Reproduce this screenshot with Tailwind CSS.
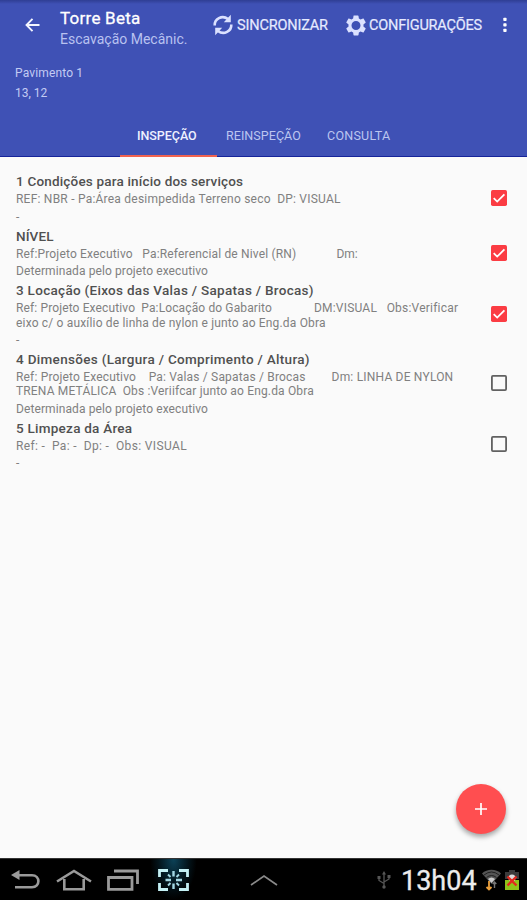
<!DOCTYPE html>
<html lang="pt-BR">
<head>
<meta charset="utf-8">
<title>Torre Beta</title>
<script src="https://cdn.jsdelivr.net/npm/@tailwindcss/browser@4"></script>
</head>
<body class="w-[527px] h-[900px] overflow-hidden bg-[#fafafa] font-[Roboto,sans-serif] flex flex-col [&_p]:whitespace-pre">
<header class="h-[157px] shrink-0 bg-[#3f51b5] border-b border-[#16249a] flex flex-col text-white">
  <div class="h-1 shrink-0 bg-linear-to-b from-[#2f3e94] to-[#3f51b5]"></div>
  <div class="h-[46px] shrink-0 flex items-center">
    <svg class="ml-[25px] w-[15px] h-[14px] -mt-1" viewBox="0 0 15 14" fill="none" stroke="#f4f6ff" stroke-width="1.9"><path d="M7.5 .8L1.5 7l6 6.200M1.500 7H14.500"/></svg>
    <div class="ml-5 mt-[3px] w-[153px] flex flex-col">
      <h1 class="text-[17px] leading-[21px] tracking-[0.25px] [-webkit-text-stroke:0.3px_white]">Torre Beta</h1>
      <p class="text-[14px] leading-[21px] text-[#b9c2f0]">Escavação Mecânic.</p>
    </div>
    <svg class="w-5 h-[22px] -mt-1" viewBox="0 0 20 22" fill="none" stroke="#dbe1ff" stroke-width="2.600"><path d="M1.700 11.500C1.300 5 9 .500 15 5M18.300 10.500C18.700 17 11 21.500 5 17"/><path fill="#dbe1ff" stroke="none" d="M17.800 .800V8.200H10.800zM2.200 21.200V13.800H9.200z"/></svg>
    <span class="ml-1 w-[109px] -mt-[3px] text-[14.5px] leading-5 tracking-[-0.17px] text-[#e6eaff] [-webkit-text-stroke:0.2px_#e6eaff]">SINCRONIZAR</span>
    <svg class="w-[20px] h-[21px] -mt-1" viewBox="2 2 20 20" fill="#dbe1ff"><path fill-rule="evenodd" d="M19.430 12.980c.04-.32.070-.64.070-.98s-.030-.66-.070-.98l2.110-1.650c.190-.150.240-.420.120-.640l-2-3.460c-.120-.220-.390-.300-.610-.220l-2.490 1c-.520-.400-1.080-.730-1.690-.980l-.380-2.650A.488.488 0 0 0 14 2h-4c-.250 0-.460.180-.490.420l-.380 2.650c-.610.250-1.170.590-1.690.980l-2.490-1c-.230-.090-.490 0-.610.220l-2 3.460c-.130.220-.070.490.120.640l2.110 1.650c-.040.320-.070.650-.070.980s.030.660.070.980l-2.110 1.650c-.190.150-.240.420-.120.640l2 3.460c.120.220.390.300.610.220l2.490-1c.520.400 1.080.730 1.690.980l.380 2.650c.030.240.240.420.490.420h4c.250 0 .460-.180.490-.420l.380-2.650c.610-.250 1.170-.590 1.690-.980l2.490 1c.230.090.490 0 .610-.220l2-3.460c.120-.220.070-.490-.120-.640zM12 16.500a4.500 4.500 0 1 1 0-9 4.500 4.500 0 0 1 0 9z"/></svg>
    <span class="ml-[3px] w-[134px] -mt-[3px] text-[14.5px] leading-5 tracking-[-0.2px] text-[#e6eaff] [-webkit-text-stroke:0.2px_#e6eaff]">CONFIGURAÇÕES</span>
    <svg class="w-1 h-4 -mt-1" viewBox="0 0 4 16" fill="#fff"><rect x=".3" y=".8" width="3.300" height="3.200" rx=".8"/><rect x=".3" y="6.300" width="3.300" height="3.200" rx=".8"/><rect x=".3" y="11.800" width="3.300" height="3.200" rx=".8"/></svg>
  </div>
  <div class="h-[71px] shrink-0 pt-[13px] pl-[15px] text-[12px] leading-5 text-[#c3cbf3]">
    <p class="tracking-[0.15px]">Pavimento 1</p>
    <p>13, 12</p>
  </div>
  <nav class="h-9 shrink-0 pl-[120px] flex text-[12.5px] leading-[30px] text-[#bcc5f0]">
    <div class="w-[97px] pl-[17px] text-[#eef0ff] font-medium border-b-2 border-[#f0624f]"><span class="tracking-[-0.05px]">INSPEÇÃO</span></div>
    <div class="w-[101px] pl-[9px]"><span class="tracking-[0.05px]">REINSPEÇÃO</span></div>
    <div class="pl-[9px]"><span class="tracking-[0.25px]">CONSULTA</span></div>
  </nav>
</header>
<main class="grow pt-[15.4px] pl-4 pr-5 flex flex-col text-[12px] leading-[14.25px] text-[#808080]">
  <section class="flex items-center pb-[3.25px]">
    <div class="grow">
      <h2 class="text-[13.5px] leading-[18px] mb-0.5 font-medium text-[#505050] tracking-[0.18px]">1 Condições para início dos serviços</h2>
      <p class="tracking-[0.225px]">REF: NBR - Pa:Área desimpedida Terreno seco  DP: VISUAL</p>
      <p class="mt-[3px] h-[14px]">-</p>
    </div>
    <svg class="w-4 h-4" viewBox="0 0 16 16"><rect width="16" height="16" rx="1.700" fill="#fb3c43"/><path d="M2.700 8.200l3.500 3.400 7.200-7.300" fill="none" stroke="#fff" stroke-width="1.800"/></svg>
  </section>
  <section class="flex items-center pb-[3.25px]">
    <div class="grow">
      <h2 class="text-[13.5px] leading-[18px] mb-0.5 font-medium text-[#505050] tracking-[0.1px]">NÍVEL</h2>
      <p><span class="tracking-[0.165px]">Ref:Projeto Executivo   Pa:Referencial de Nivel (RN)</span><span class="ml-[40px]">Dm:</span></p>
      <p class="mt-[3px] h-[14px] tracking-[0.1px]">Determinada pelo projeto executivo</p>
    </div>
    <svg class="w-4 h-4" viewBox="0 0 16 16"><rect width="16" height="16" rx="1.700" fill="#fb3c43"/><path d="M2.700 8.200l3.500 3.400 7.200-7.300" fill="none" stroke="#fff" stroke-width="1.800"/></svg>
  </section>
  <section class="flex items-center pb-[3.25px]">
    <div class="grow">
      <h2 class="text-[13.5px] leading-[18px] mb-0.5 font-medium text-[#505050] tracking-[0.295px]">3 Locação (Eixos das Valas / Sapatas / Brocas)</h2>
      <p><span class="tracking-[0.125px]">Ref: Projeto Executivo  Pa:Locação do Gabarito</span><span class="ml-[42px] tracking-[0.21px]">DM:VISUAL   Obs:Verificar</span></p>
      <p class="tracking-[0.175px]">eixo c/ o auxílio de linha de nylon e junto ao Eng.da Obra</p>
      <p class="mt-[3px] h-[14px]">-</p>
    </div>
    <svg class="w-4 h-4" viewBox="0 0 16 16"><rect width="16" height="16" rx="1.700" fill="#fb3c43"/><path d="M2.700 8.200l3.500 3.400 7.200-7.300" fill="none" stroke="#fff" stroke-width="1.800"/></svg>
  </section>
  <section class="flex items-center pb-[3.25px]">
    <div class="grow">
      <h2 class="text-[13.5px] leading-[18px] mb-0.5 font-medium text-[#505050] tracking-[0.31px]">4 Dimensões (Largura / Comprimento / Altura)</h2>
      <p><span class="tracking-[0.17px]">Ref: Projeto Executivo    Pa: Valas / Sapatas / Brocas</span><span class="ml-[26px] tracking-[0.2px]">Dm: LINHA DE NYLON</span></p>
      <p class="tracking-[0.16px]">TRENA METÁLICA  Obs :Veriifcar junto ao Eng.da Obra</p>
      <p class="mt-[3px] h-[14px] tracking-[0.1px]">Determinada pelo projeto executivo</p>
    </div>
    <svg class="w-4 h-4" viewBox="0 0 16 16"><rect x=".9" y=".9" width="14.200" height="14.200" rx="1" fill="none" stroke="#616161" stroke-width="1.800"/></svg>
  </section>
  <section class="flex items-center pb-[3.25px]">
    <div class="grow">
      <h2 class="text-[13.5px] leading-[18px] mb-0.5 font-medium text-[#505050] tracking-[0.25px]">5 Limpeza da Área</h2>
      <p class="tracking-[0.36px]">Ref: -  Pa: -  Dp: -  Obs: VISUAL</p>
      <p class="mt-[3px] h-[14px]">-</p>
    </div>
    <svg class="w-4 h-4 -mt-[1px]" viewBox="0 0 16 16"><rect x=".9" y=".9" width="14.200" height="14.200" rx="1" fill="none" stroke="#616161" stroke-width="1.800"/></svg>
  </section>
</main>
<button class="absolute left-[456px] top-[784px] w-[50px] h-[50px] rounded-full bg-[#ff4e50] shadow-[0_3px_5px_rgba(0,0,0,0.35)] flex items-center justify-center" aria-label="Adicionar">
  <svg class="w-3 h-3" viewBox="0 0 12 12" stroke="#fff" stroke-width="1.700"><path d="M6 0V12M0 6H12"/></svg>
</button>
<footer class="h-[42px] shrink-0 bg-black flex items-center border-t border-[#333]">
  <svg class="ml-[11px] w-[29px] h-5" viewBox="0 0 29 20" fill="none" stroke="#9a9a9a" stroke-width="2.600"><path d="M7 5.200H21C29.500 5.200 29.500 17.300 21 17.300H4"/><path d="M0 5L8.500 0V10z" fill="#9a9a9a" stroke="none"/></svg>
  <svg class="ml-4 w-9 h-[22px]" viewBox="0 0 36 22" fill="none" stroke="#9a9a9a" stroke-width="2.600"><path d="M1 12.500L18 2l17 10.500M8.300 10V20.300H27.700V10"/></svg>
  <svg class="ml-[15px] w-8 h-[22px]" viewBox="0 0 32 22" fill="none" stroke="#9a9a9a" stroke-width="2.800"><path d="M1.500 8.500H25V20.300H1.500zM7 2H30.500V15"/></svg>
  <div class="ml-[11px] w-[47px] h-[41px] flex items-center justify-center bg-[radial-gradient(ellipse_at_top,#0c4258,#03141b_45%,#000_70%)]">
    <svg class="w-[31px] h-[22px]" viewBox="0 0 31 22" fill="none" stroke="#c4f0f4" stroke-width="2.800"><path d="M1.500 8V1.500H10M21 1.500H29.500V8M29.500 14V20.500H21M10 20.500H1.500V14"/><path stroke-width="2.400" stroke="#a4d8e4" d="M15.500 2V7.500M15.500 14.500V20M7.500 11H13M18 11H24"/><path stroke-width="1.900" stroke="#a4d8e4" d="M10 5.500l2.500 2.500M21 5.500L18.500 8M10 16.500l2.500-2.500M21 16.500L18.500 14"/></svg>
  </div>
  <svg class="ml-[53px] w-7 h-3" viewBox="0 0 28 12" fill="none" stroke="#8a8a8a" stroke-width="1.700"><path d="M1 11L14 2l13 9"/></svg>
  <svg class="ml-[99px] w-[14px] h-[18px]" viewBox="0 0 14 18" fill="none" stroke="#565656" stroke-width="1.300"><path d="M7 2V16M2 6V9.500L7 12.500M12 5V8L7 11"/><path fill="#565656" stroke="none" d="M7 0L9 3.500H5zM.5 5h3v3h-3zM10.500 4h3v3h-3z"/><circle cx="7" cy="16" r="1.700" fill="#565656" stroke="none"/></svg>
  <span class="ml-[10px] w-[75px] mt-[2px] text-[27px] leading-[30px] text-[#ececec] [-webkit-text-stroke:0.3px_#ececec]">13h04</span>
  <svg class="ml-[6px] w-[19px] h-[22px] shrink-0" viewBox="0 0 19 22" fill="none"><path d="M0 4.500C5-.5 14-.5 19 4.500L9.500 15z" fill="#555"/><path d="M2 6Q9.500 0 17 6M4.500 8.500Q9.500 4.500 14.500 8.500" stroke="#222"/><path d="M6 10Q9.500 7 13 10L9.500 14z" fill="#ccc"/><path d="M7 12V21M4.500 18L7 20.500 9.500 18" stroke="#eca03c" stroke-width="1.800"/><path d="M12.500 19V13M10.700 15l1.800-2 1.800 2" stroke="#777" stroke-width="1.400"/></svg>
  <svg class="ml-[4px] w-[14px] h-[20px] shrink-0" viewBox="0 0 14 20"><path d="M4 0H10V2H14V9H0V2H4z" fill="#3b3b3b"/><path d="M0 10H14V20H0z" fill="#8fc31a"/><circle cx="7" cy="8" r="3.500" fill="#ddd"/><path d="M2.500 6.500l9 9M11.500 6.500l-9 9" stroke="#e3281e" stroke-width="2.400"/></svg>
</footer>
</body>
</html>
